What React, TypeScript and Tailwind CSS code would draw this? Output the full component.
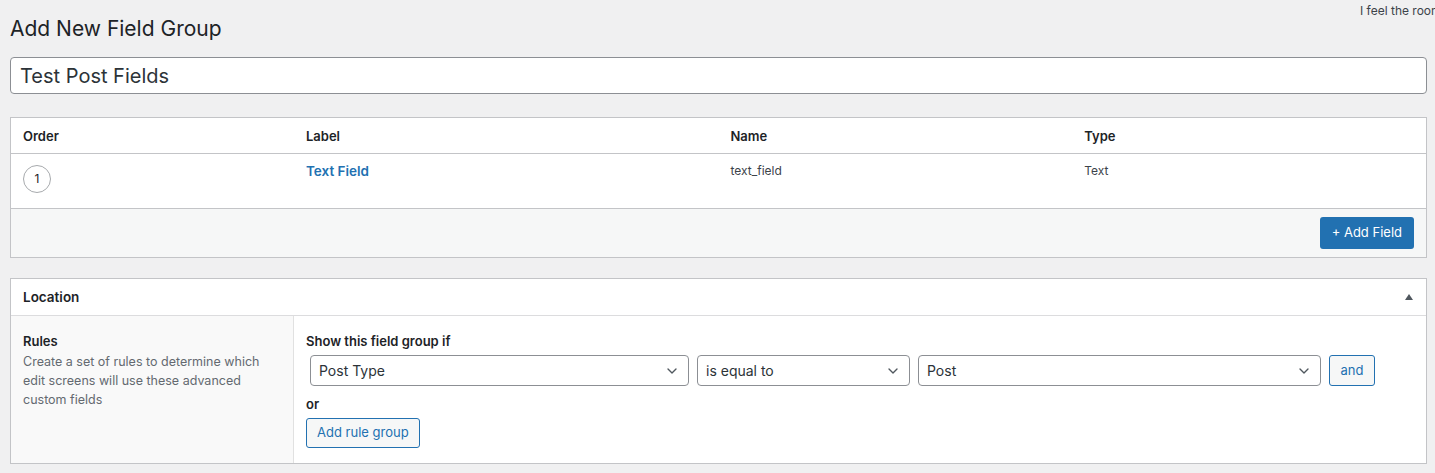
import { ChevronDown } from "lucide-react";

const font = { fontFamily: "Inter, 'Noto Sans', sans-serif" };

function Select({ value, className }: { value: string; className: string }) {
  return (
    <div
      className={`flex items-center justify-between h-[31px] px-2 border border-[#8c8f94] rounded-[4px] bg-white text-[14px] text-[#2c3338] ${className}`}
    >
      <span>{value}</span>
      <ChevronDown size={16} strokeWidth={2} className="text-[#50575e]" />
    </div>
  );
}

export default function App() {
  return (
    <div className="min-h-screen bg-[#f0f0f1] text-[#1d2327] overflow-hidden relative" style={font}>
      <p className="absolute left-[1360px] top-[2px] text-[12px] text-[#3c434a] whitespace-nowrap">
        I feel the room swayin'
      </p>

      <div className="pl-[10px] pr-[8px] pt-[14px]">
        <h1 className="text-[21px] leading-[29px] font-normal text-[#1d2327]">Add New Field Group</h1>

        <div className="mt-[14px] h-[37px] border border-[#8c8f94] rounded-[4px] bg-white flex items-center px-[9px] text-[20px] text-[#2c3338]">
          Test Post Fields
        </div>

        {/* fields */}
        <div className="mt-[23px] border border-[#c3c4c7] bg-white">
          <div className="grid grid-cols-[20%_30%_25%_25%] h-[36px] items-center border-b border-[#c3c4c7] text-[13px] font-semibold pt-[3px]">
            <div className="px-3">Order</div>
            <div className="px-3">Label</div>
            <div className="px-3">Name</div>
            <div className="px-3">Type</div>
          </div>
          <div className="grid grid-cols-[20%_30%_25%_25%] h-[55px] border-b border-[#c3c4c7] text-[12px] text-[#3c434a]">
            <div className="px-3 pt-[11px]">
              <div className="w-[28px] h-[28px] rounded-full border border-[#a7aaad] flex items-center justify-center text-[12px] text-[#1d2327]">
                1
              </div>
            </div>
            <div className="px-3 pt-[7px] text-[13.5px] font-semibold text-[#2271b1]">Text Field</div>
            <div className="px-3 pt-[8px]">text_field</div>
            <div className="px-3 pt-[8px]">Text</div>
          </div>
          <div className="h-[48px] bg-[#f6f7f7] flex items-center justify-end px-3">
            <button className="h-[32px] px-[12px] rounded-[3px] bg-[#2271b1] text-white text-[13px]">
              + Add Field
            </button>
          </div>
        </div>

        {/* location */}
        <div className="mt-[20px] border border-[#c3c4c7] bg-white">
          <div className="h-[37px] flex items-center justify-between px-3 border-b border-[#dcdcde]">
            <span className="text-[13.5px] font-semibold">Location</span>
            <span className="w-0 h-0 border-l-[4px] border-r-[4px] border-b-[6px] border-l-transparent border-r-transparent border-b-[#50575e] mr-[1px]" />
          </div>
          <div className="flex">
            <div className="w-[20%] shrink-0 bg-[#f9f9f9] border-r border-[#e1e1e1] px-3 pt-[16px] pb-4">
              <div className="text-[13px] font-semibold leading-[18px]">Rules</div>
              <p className="text-[12.5px] leading-[19px] text-[#646970] mt-[2px] pr-4">
                Create a set of rules to determine which edit screens will use these advanced custom fields
              </p>
            </div>
            <div className="flex-1 px-3 pt-[16px] pb-[15px]">
              <div className="text-[13px] font-semibold leading-[18px]">Show this field group if</div>
              <div className="flex items-center gap-[8px] mt-[5px] ml-[4px]">
                <Select value="Post Type" className="w-[379px]" />
                <Select value="is equal to" className="w-[213px]" />
                <Select value="Post" className="w-[403px]" />
                <button className="h-[31px] w-[46px] border border-[#2271b1] rounded-[3px] bg-[#f6f7f7] text-[13px] text-[#2271b1]">
                  and
                </button>
              </div>
              <div className="text-[13px] font-semibold mt-[9px] leading-[18px]">or</div>
              <button className="mt-[5px] h-[30px] px-[10px] border border-[#2271b1] rounded-[3px] bg-[#f6f7f7] text-[13px] text-[#2271b1]">
                Add rule group
              </button>
            </div>
          </div>
        </div>
      </div>
    </div>
  );
}
